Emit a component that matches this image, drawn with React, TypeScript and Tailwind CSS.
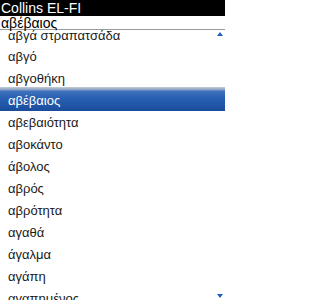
import React from "react";

const items = [
  "αβγό",
  "αβγοθήκη",
  "αβέβαιος",
  "αβεβαιότητα",
  "αβοκάντο",
  "άβολος",
  "αβρός",
  "αβρότητα",
  "αγαθά",
  "άγαλμα",
  "αγάπη",
  "αγαπημένος",
];

export default function App() {
  return (
    <div
      className="relative w-[225px] h-[300px] overflow-hidden bg-white text-[#1a1a1a]"
      style={{ fontFamily: '"Liberation Sans", Arial, sans-serif' }}
    >
      <div className="h-[16px] bg-black text-white text-[14px] leading-[16px] pl-[1px]">
        Collins EL-FI
      </div>
      <div className="h-[14px] border-b border-[#9a9a9a] text-[14px] leading-[14px] pl-[1px] text-black">
        αβέβαιος
      </div>
      <div className="h-[14px] pl-[8px] text-[13px] leading-[11px]">αβγά στραπατσάδα</div>
      {items.map((t, i) =>
        i === 2 ? (
          <div
            key={t}
            className="relative z-10 -my-px h-[24px] pl-[8px] pt-[4px] text-[13px] leading-[19px] text-white bg-[linear-gradient(to_bottom,#c3ccd8_0%,#93a8c6_10%,#3f72bd_18%,#2a60b2_45%,#1a4c9c_100%)]"
          >
            {t}
          </div>
        ) : (
          <div key={t} className="h-[22px] pl-[8px] pt-[3px] text-[13px] leading-[19px]">
            {t}
          </div>
        )
      )}
      <div className="absolute left-[217px] top-[32px] w-0 h-0 border-l-[3px] border-r-[3px] border-b-[4px] border-l-transparent border-r-transparent border-b-[#1f5fc0]" />
      <div className="absolute left-[217px] top-[294px] w-0 h-0 border-l-[3px] border-r-[3px] border-t-[4px] border-l-transparent border-r-transparent border-t-[#1f5fc0]" />
    </div>
  );
}
